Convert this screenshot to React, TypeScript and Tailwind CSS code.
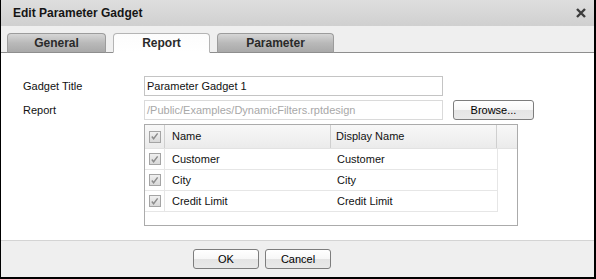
const tabs = [
  { label: "General", width: "w-[99px]", active: false },
  { label: "Report", width: "w-[97px]", active: true },
  { label: "Parameter", width: "w-[117px]", active: false },
];

const rows = [
  { name: "Customer", display: "Customer" },
  { name: "City", display: "City" },
  { name: "Credit Limit", display: "Credit Limit" },
];

function CheckBox() {
  return (
    <div className="flex h-[12px] w-[12px] items-center justify-center border border-[#a4a4a4] bg-gradient-to-b from-[#f0f0f0] to-[#d8d8d8]">
      <svg viewBox="0 0 10 10" className="h-[9px] w-[9px]" fill="none" stroke="#8c8c8c" strokeWidth="1.6">
        <path d="M2 5l2 2.5L8.5 1.5" />
      </svg>
    </div>
  );
}

function Button({ label, className }: { label: string; className: string }) {
  return (
    <button
      className={`flex h-[20px] items-center justify-center rounded-[3px] border border-[#7d7d7d] bg-[linear-gradient(#ffffff_0%,#f7f7f7_50%,#e4e4e4_50%,#e9e9e9_100%)] text-[11px] text-black ${className}`}
    >
      {label}
    </button>
  );
}

export default function App() {
  return (
    <div className="flex h-[279px] w-[596px] flex-col border-b-2 border-l border-r-2 border-black bg-white font-['Liberation_Sans',Arial,sans-serif] text-[11px] text-[#111]">
      <div className="flex h-[26px] shrink-0 items-center justify-between bg-gradient-to-b from-[#dedede] to-[#d0d0d0] pl-[12px] pr-[8px]">
        <span className="text-[12px] font-bold text-[#151515]">Edit Parameter Gadget</span>
        <svg viewBox="0 0 10 10" className="h-[10px] w-[10px]" fill="none" stroke="#3c3c3c" strokeWidth="2.4">
          <path d="M1 1l8 8M9 1l-8 8" />
        </svg>
      </div>

      <div className="flex h-[27px] shrink-0 items-end gap-[7px] border-b border-[#8e8e8e] bg-[#efefef] pl-[6px]">
        {tabs.map((tab) => (
          <div
            key={tab.label}
            className={`-mb-px flex h-[20px] items-center justify-center rounded-t-[4px] border text-[12px] font-bold text-[#2a2a2a] ${tab.width} ${
              tab.active
                ? "border-[#b4b4b4] border-b-white bg-gradient-to-b from-[#fcfcfc] to-[#ffffff]"
                : "border-[#9c9c9c] border-b-[#8e8e8e] bg-gradient-to-b from-[#d6d6d6] via-[#b9b9b9] to-[#a9a9a9]"
            }`}
          >
            {tab.label}
          </div>
        ))}
      </div>

      <div className="flex h-[187px] shrink-0 flex-col gap-[4px] bg-white pl-[22px] pt-[23px]">
        <div className="flex h-[20px] items-center">
          <span className="w-[121px]">Gadget Title</span>
          <div className="flex h-[20px] w-[299px] items-center border border-[#c4c4c4] px-[2px] text-[#111]">
            Parameter Gadget 1
          </div>
        </div>
        <div className="flex h-[20px] items-center">
          <span className="w-[121px]">Report</span>
          <div className="flex h-[20px] w-[299px] items-center border border-[#dadada] px-[2px] text-[#a8a8a8]">
            /Public/Examples/DynamicFilters.rptdesign
          </div>
          <Button label="Browse..." className="ml-[10px] w-[81px]" />
        </div>

        <div className="ml-[121px] flex h-[102px] w-[374px] flex-col border border-[#ababab]">
          <div className="flex h-[24px] border-b border-[#e2e2e2] bg-gradient-to-b from-[#f8f8f8] to-[#ebebeb]">
            <div className="flex w-[20px] items-center justify-center border-r border-[#cfcfcf]">
              <CheckBox />
            </div>
            <div className="flex w-[166px] items-center border-r border-[#cfcfcf] pl-[7px]">Name</div>
            <div className="flex w-[166px] items-center border-r border-[#cfcfcf] pl-[5px]">Display Name</div>
            <div className="flex-1" />
          </div>
          {rows.map((row) => (
            <div key={row.name} className="flex h-[21px] w-[353px] border-b border-[#e6e6e6]">
              <div className="flex w-[20px] items-center justify-center border-r border-[#e6e6e6]">
                <CheckBox />
              </div>
              <div className="flex w-[166px] items-center pl-[7px]">{row.name}</div>
              <div className="flex flex-1 items-center border-r border-[#e6e6e6] pl-[6px]">{row.display}</div>
            </div>
          ))}
        </div>
      </div>

      <div className="flex flex-1 items-center gap-[6px] border-t border-[#d4d4d4] bg-[#efefef] pl-[192px]">
        <Button label="OK" className="w-[66px]" />
        <Button label="Cancel" className="w-[66px]" />
      </div>
    </div>
  );
}
